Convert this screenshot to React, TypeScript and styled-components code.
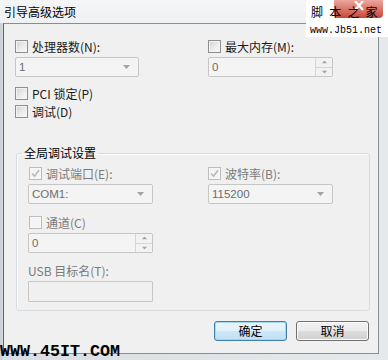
import React from "react";
import styled, { createGlobalStyle } from "styled-components";

const GlobalStyle = createGlobalStyle`
  html, body {
    margin: 0;
    padding: 0;
  }
  body {
    width: 388px;
    height: 360px;
    overflow: hidden;
    font-family: "Noto Sans CJK SC", "Liberation Sans", sans-serif;
    font-size: 12px;
    color: #000;
  }
`;

const Check = ({ checked, disabled }: { checked?: boolean; disabled?: boolean }) => (
  <Box $disabled={disabled}>
    {checked && (
      <svg width="9" height="9" viewBox="0 0 9 9">
        <path d="M1 4.5 L3.6 7.2 L8 1.2" fill="none" stroke={disabled ? "#b6b6b6" : "#4a5f97"} strokeWidth="1.5" />
      </svg>
    )}
  </Box>
);

const Arrow = ({ up }: { up?: boolean }) => (
  <svg width="7" height="4" viewBox="0 0 7 4">
    <path d={up ? "M0 4 L3.5 0 L7 4 Z" : "M0 0 L7 0 L3.5 4 Z"} fill="#a3a3a3" />
  </svg>
);

const App = () => {
  return (
    <>
      <GlobalStyle />
      <Window>
        <TitleBar>引导高级选项</TitleBar>
        <Body>
          <TopGrid>
            <Field>
              <CheckRow>
                <Check />
                <Label>处理器数(N):</Label>
              </CheckRow>
              <Select $width={124}>
                <span>1</span>
                <Arrow />
              </Select>
            </Field>
            <Field>
              <CheckRow>
                <Check />
                <Label>最大内存(M):</Label>
              </CheckRow>
              <Spin $width={125}>
                <span>0</span>
                <SpinButtons>
                  <SpinHalf><Arrow up /></SpinHalf>
                  <SpinHalf><Arrow /></SpinHalf>
                </SpinButtons>
              </Spin>
            </Field>
          </TopGrid>

          <Options>
            <CheckRow>
              <Check />
              <Label>PCI 锁定(P)</Label>
            </CheckRow>
            <CheckRow>
              <Check />
              <Label>调试(D)</Label>
            </CheckRow>
          </Options>

          <Group>
            <Legend>全局调试设置</Legend>
            <GroupGrid>
              <Field>
                <CheckRow $inset>
                  <Check checked disabled />
                  <Label $muted>调试端口(E):</Label>
                </CheckRow>
                <Select $width={125}>
                  <span>COM1:</span>
                  <Arrow />
                </Select>
              </Field>
              <Field>
                <CheckRow>
                  <Check checked disabled />
                  <Label $muted>波特率(B):</Label>
                </CheckRow>
                <Select $width={125}>
                  <span>115200</span>
                  <Arrow />
                </Select>
              </Field>
            </GroupGrid>

            <Field $top={12}>
              <CheckRow $inset>
                <Check disabled />
                <Label $muted>通道(C)</Label>
              </CheckRow>
              <Spin $width={125}>
                <span>0</span>
                <SpinButtons>
                  <SpinHalf><Arrow up /></SpinHalf>
                  <SpinHalf><Arrow /></SpinHalf>
                </SpinButtons>
              </Spin>
            </Field>

            <Field $top={11}>
              <Label $muted>USB 目标名(T):</Label>
              <TextBox />
            </Field>
          </Group>

          <Buttons>
            <Button $primary>确定</Button>
            <Button>取消</Button>
          </Buttons>
        </Body>

        <TopMark>
          <CloseButton>
            <svg width="12" height="10" viewBox="0 0 12 10">
              <path d="M2 0 L10 9 M10 0 L2 9" stroke="#fff" strokeWidth="2.2" />
            </svg>
          </CloseButton>
          <MarkName>脚 本 之 家</MarkName>
          <MarkUrl>www.Jb51.net</MarkUrl>
        </TopMark>
        <BottomMark>WWW.45IT.COM</BottomMark>
      </Window>
    </>
  );
};

const Window = styled.div`
  position: relative;
  width: 388px;
  height: 360px;
  overflow: hidden;
  background: linear-gradient(90deg, #c9ced4 0px, #d9dde2 3px, #e6e9ec 100%);
`;

const TitleBar = styled.div`
  height: 23px;
  display: flex;
  align-items: center;
  padding-left: 4px;
  font-size: 12px;
  background: linear-gradient(#f4f5f6, #eef0f2);
`;

const Body = styled.div`
  box-sizing: border-box;
  width: 376px;
  height: 331px;
  margin-left: 3px;
  padding: 16px 9px 0 11px;
  border: 1px solid #8a8e94;
  border-left-color: #5e6166;
  background: #f0f0f0;
`;

const TopGrid = styled.div`
  display: grid;
  grid-template-columns: 193px 1fr;
`;

const GroupGrid = styled.div`
  display: grid;
  grid-template-columns: 180px 1fr;
`;

const Field = styled.div<{ $top?: number }>`
  display: flex;
  flex-direction: column;
  align-items: flex-start;
  gap: 4px;
  margin-top: ${(p) => p.$top ?? 0}px;
`;

const CheckRow = styled.div<{ $inset?: boolean }>`
  display: flex;
  align-items: center;
  gap: 4px;
  height: 13px;
  margin-left: ${(p) => (p.$inset ? 1 : 0)}px;
`;

const Label = styled.span<{ $muted?: boolean }>`
  display: block;
  height: 13px;
  font-size: 12px;
  line-height: 13px;
  white-space: pre;
  color: ${(p) => (p.$muted ? "#7a7a7a" : "#1a1a1a")};
`;

const Box = styled.span<{ $disabled?: boolean }>`
  box-sizing: border-box;
  flex: none;
  width: 13px;
  height: 13px;
  display: flex;
  align-items: center;
  justify-content: center;
  border: 1px solid ${(p) => (p.$disabled ? "#bcbcbc" : "#8e8f8f")};
  background: ${(p) =>
    p.$disabled ? "#f4f4f4" : "linear-gradient(135deg, #cfd1d3 0%, #eeeeee 60%, #f8f8f8 100%)"};
  box-shadow: inset 0 0 0 1px ${(p) => (p.$disabled ? "#f7f7f7" : "#f3f3f3")};
`;

const Options = styled.div`
  display: flex;
  flex-direction: column;
  gap: 5px;
  margin-top: 10px;
`;

const Select = styled.div<{ $width: number }>`
  box-sizing: border-box;
  width: ${(p) => p.$width}px;
  height: 20px;
  display: flex;
  align-items: center;
  justify-content: space-between;
  padding: 0 8px 0 3px;
  border: 1px solid #c6c6c6;
  border-radius: 2px;
  background: #f4f4f4;
  color: #6d6d6d;
  font-family: "Liberation Sans", "Noto Sans CJK SC", sans-serif;
  font-size: 11.5px;
`;

const Spin = styled(Select)`
  padding-right: 0;
`;

const SpinButtons = styled.div`
  display: flex;
  flex-direction: column;
  width: 16px;
  height: 100%;
  border-left: 1px solid #d6d6d6;
`;

const SpinHalf = styled.div`
  flex: 1;
  display: flex;
  align-items: center;
  justify-content: center;
  background: #f2f2f2;
  & + & {
    border-top: 1px solid #d6d6d6;
  }
  svg {
    transform: scale(0.8);
  }
`;

const TextBox = styled.div`
  box-sizing: border-box;
  width: 125px;
  height: 21px;
  border: 1px solid #c6c6c6;
  border-radius: 1px;
  background: #f0f0f0;
`;

const Group = styled.fieldset`
  box-sizing: border-box;
  width: 354px;
  margin: 28px 0 0 1px;
  padding: 7px 0 8px 11px;
  border: 1px solid #d8dde2;
  border-radius: 3px;
  box-shadow: 1px 1px 0 #fbfbfb inset;
  min-width: 0;
`;

const Legend = styled.legend`
  margin-left: -6px;
  padding: 0 2px;
  font-size: 12px;
  line-height: 14px;
  color: #000;
`;

const Buttons = styled.div`
  display: flex;
  justify-content: flex-end;
  gap: 9px;
  margin-top: 10px;
`;

const Button = styled.button<{ $primary?: boolean }>`
  box-sizing: border-box;
  width: 73px;
  height: 20px;
  padding: 0;
  border: 1px solid ${(p) => (p.$primary ? "#3c7fb1" : "#707070")};
  border-radius: 3px;
  background: ${(p) =>
    p.$primary
      ? "linear-gradient(#eaf5fc 0%, #e0f0fa 50%, #cfe7f7 51%, #c0dff3 100%)"
      : "linear-gradient(#f2f2f2 0%, #ebebeb 50%, #dddddd 51%, #cfcfcf 100%)"};
  box-shadow: inset 0 0 0 1px ${(p) => (p.$primary ? "#a5d6f2" : "#fbfbfb")};
  font-family: "Noto Sans CJK SC", sans-serif;
  font-size: 12px;
  line-height: 16px;
  color: #000;
`;

const TopMark = styled.div`
  position: absolute;
  top: 0;
  right: 0;
  width: 82px;
  height: 37px;
  background: #fff;
`;

const CloseButton = styled.div`
  position: absolute;
  top: 0;
  left: 28px;
  width: 49px;
  height: 18px;
  display: flex;
  justify-content: center;
  padding-top: 1px;
  box-sizing: border-box;
  border-radius: 0 0 4px 4px;
  background: linear-gradient(#eba79e, #d86d60 60%, #c4473a);
`;

const MarkName = styled.div`
  position: absolute;
  top: 5px;
  left: 5px;
  font-size: 12px;
  line-height: 14px;
  letter-spacing: 1.5px;
  word-spacing: 0.5px;
  white-space: pre;
  color: #000;
`;

const MarkUrl = styled.div`
  position: absolute;
  top: 24px;
  left: 4px;
  font-family: "Liberation Mono", monospace;
  font-size: 10px;
  line-height: 13px;
  color: #000;
`;

const BottomMark = styled.div`
  position: absolute;
  left: 0;
  bottom: 1px;
  font-family: "Liberation Mono", monospace;
  font-weight: bold;
  font-size: 16.67px;
  line-height: 14px;
  color: #000;
`;

export default App;
